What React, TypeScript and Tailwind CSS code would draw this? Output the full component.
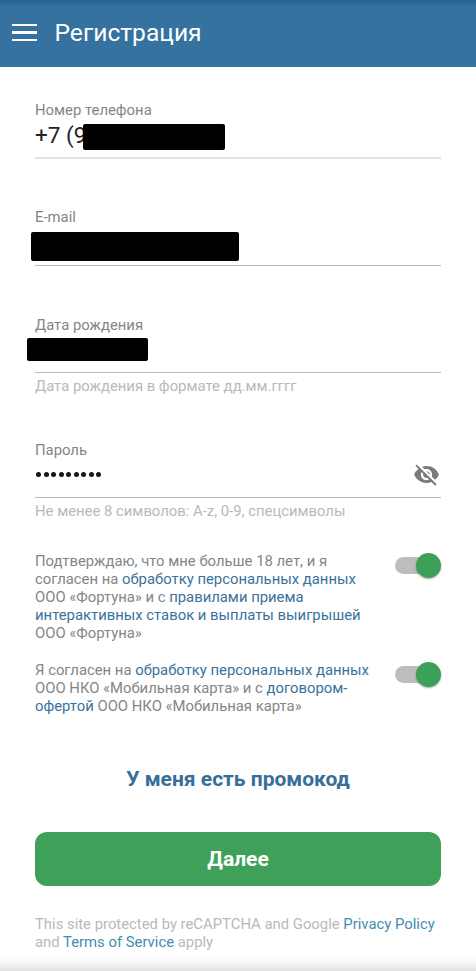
import type { ReactNode } from "react";
import { MdVisibilityOff } from "react-icons/md";

type FieldProps = {
  label: string;
  hint?: string;
  line?: string;
  className?: string;
  children: ReactNode;
};

function Field({ label, hint, line = "h-[57px] border-b border-[#b9b9b9]", className = "", children }: FieldProps) {
  return (
    <div className={className}>
      <div className={line}>
        <div className="h-[18px] text-[14.85px] leading-[18px] text-[#858585]">{label}</div>
        {children}
      </div>
      {hint && <div className="mt-1 h-[18px] text-[14.85px] leading-[18px] text-[#b9b9b9]">{hint}</div>}
    </div>
  );
}

function Link({ children }: { children: ReactNode }) {
  return <a className="text-[#3a729c]">{children}</a>;
}

function Toggle() {
  return (
    <button
      type="button"
      role="switch"
      aria-checked="true"
      className="mt-[5px] flex h-[17px] w-[46px] shrink-0 items-center justify-end rounded-full bg-linear-to-r from-[#bdbdbd] from-75% to-transparent to-75%"
    >
      <span className="size-[25px] shrink-0 rounded-full bg-[#3da058] shadow-[0_1px_2px_rgba(0,0,0,0.35)]" />
    </button>
  );
}

export default function App() {
  return (
    <div className="flex h-[971px] w-[476px] flex-col overflow-hidden bg-white font-['Roboto',sans-serif]">
      <header className="flex h-[67px] shrink-0 items-center bg-[#3572a0] bg-linear-to-b from-[#2a5d8e] to-[#3572a0] to-[7px] pl-3">
        <div className="mb-[2px] flex w-[25px] flex-col gap-[5px]">
          <span className="h-[2px] bg-white" />
          <span className="h-[3px] bg-white" />
          <span className="h-[2px] bg-white" />
        </div>
        <h1 className="mb-[2px] ml-[17.5px] text-[24.6px] leading-8 text-white">Регистрация</h1>
      </header>

      <main className="flex w-[441px] flex-1 flex-col pt-[34px] pl-[35px]">
        <Field label="Номер телефона" line="h-[58px] border-b-2 border-[#e2e2e2]">
          <div className="mt-[2px] flex items-start text-[22.5px] leading-7 text-[#242424]">
            <span className="w-[48px] whitespace-nowrap">+7 (9</span>
            <span className="z-10 mt-[3px] h-[26px] w-[142px] rounded-[2px] bg-black" />
          </div>
        </Field>

        <Field label="E-mail" className="mt-[49px]" line="h-[58px] border-b border-[#b9b9b9]">
          <div className="mt-[6px] -ml-1 h-[29px] w-[208px] rounded-[2px] bg-black" />
        </Field>

        <Field label="Дата рождения" hint="Дата рождения в формате дд.мм.гггг" className="mt-[50px]">
          <div className="mt-1 -ml-2 h-[23px] w-[121px] rounded-[2px] bg-black" />
        </Field>

        <Field label="Пароль" hint="Не менее 8 символов: A-z, 0-9, спецсимволы" className="mt-[46px]">
          <div className="flex items-center justify-between pt-[2px] pr-[1px] pl-[1px]">
            <div className="flex gap-[2.5px]">
              {Array.from({ length: 9 }, (_, i) => (
                <span key={i} className="size-[5px] rounded-full bg-[#161616]" />
              ))}
            </div>
            <MdVisibilityOff className="size-[27px] text-[#7a7a7a]" />
          </div>
        </Field>

        <div className="mt-8 flex justify-between text-[14.85px] leading-[18px] text-[#858585]">
          <p className="whitespace-nowrap">
            Подтверждаю, что мне больше 18 лет, и я<br />
            согласен на <Link>обработку персональных данных</Link><br />
            ООО «Фортуна» и с <Link>правилами приема</Link><br />
            <Link>интерактивных ставок и выплаты выигрышей</Link><br />
            ООО «Фортуна»
          </p>
          <Toggle />
        </div>

        <div className="mt-[19px] flex justify-between text-[14.85px] leading-[18px] text-[#858585]">
          <p className="whitespace-nowrap">
            Я согласен на <Link>обработку персональных данных</Link><br />
            ООО НКО «Мобильная карта» и с <Link>договором-</Link><br />
            <Link>офертой</Link> ООО НКО «Мобильная карта»
          </p>
          <Toggle />
        </div>

        <button type="button" className="mt-[50px] h-7 text-[21px] leading-7 font-bold text-[#366f9a]">
          У меня есть промокод
        </button>
        <button type="button" className="mt-[39px] h-[54px] shrink-0 rounded-xl bg-[#3fa159] pt-px text-[21px] font-bold text-white">
          Далее
        </button>
        <p className="mt-[29px] text-[14.85px] leading-[18px] whitespace-nowrap text-[#b9b9b9]">
          This site protected by reCAPTCHA and Google <a className="text-[#458db0]">Privacy Policy</a><br />
          and <a className="text-[#458db0]">Terms of Service</a> apply
        </p>
      </main>
      <footer className="h-[16px] shrink-0 bg-linear-to-b from-white via-[#f6f6f6] to-[#dfdfdf]" />
    </div>
  );
}
